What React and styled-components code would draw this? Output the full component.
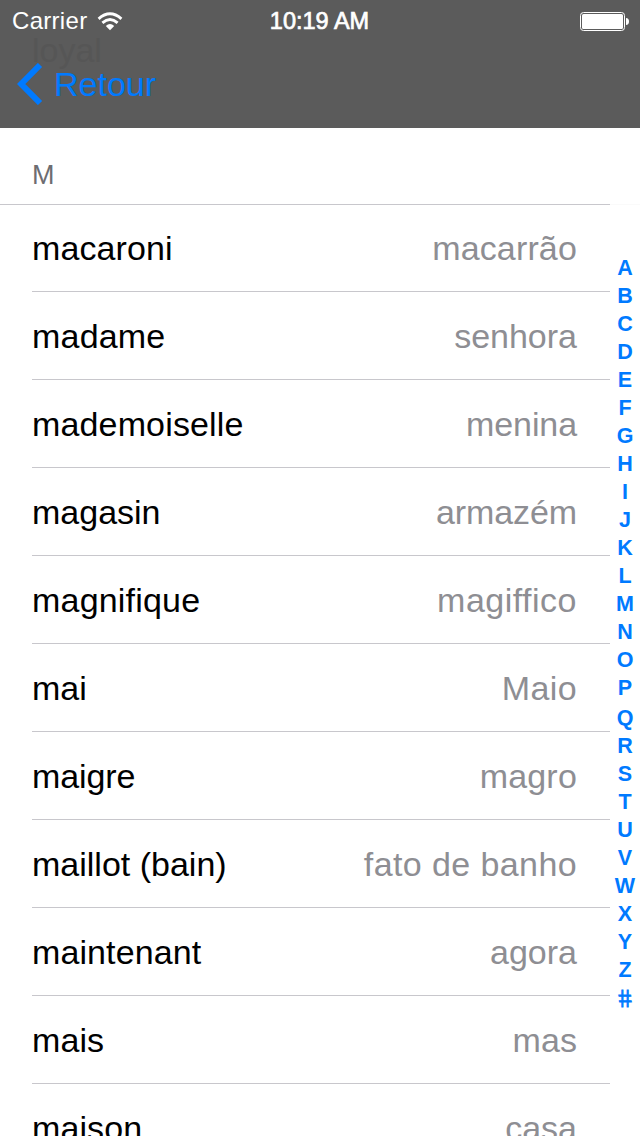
import React from "react";
import styled, { createGlobalStyle, css } from "styled-components";

const GlobalStyle = createGlobalStyle`
  body {
    margin: 0;
    background: #fff;
    overflow: hidden;
    font-family: "Liberation Sans", Arial, sans-serif;
  }
`;

const Screen = styled.div`
  position: relative;
  width: 640px;
  height: 1136px;
  overflow: hidden;
  background: #fff;
`;

const TopBar = styled.header`
  position: relative;
  height: 128px;
  background: #5b5b5b;
`;

const StatusBar = styled.div`
  position: relative;
  display: grid;
  grid-template-columns: 1fr auto 1fr;
  align-items: center;
  height: 40px;
  padding: 0 11px 0 12px;
  color: #fff;
  font-size: 24px;
`;

const Carrier = styled.div`
  display: flex;
  align-items: center;
  gap: 10px;
  letter-spacing: 0.3px;
  line-height: 42px;
`;

const Clock = styled.div`
  padding-right: 2px;
  line-height: 42px;
  font-size: 23.5px;
  -webkit-text-stroke: 0.7px #fff;
`;

const Battery = styled.div`
  display: flex;
  justify-content: flex-end;
`;

const BackButton = styled.button`
  position: relative;
  display: flex;
  align-items: center;
  gap: 11px;
  height: 88px;
  padding: 0 0 0 17px;
  border: 0;
  background: none;
  color: #007aff;
  font: 34px/88px "Liberation Sans", Arial, sans-serif;
  letter-spacing: 0;
`;

const HiddenWord = styled.span`
  position: absolute;
  left: 32px;
  top: 30px;
  color: #565656;
  font-size: 34px;
  line-height: 40px;
`;

const SectionHeader = styled.h2`
  box-sizing: border-box;
  height: 77px;
  margin: 0;
  padding: 32px 0 0 32px;
  border-bottom: 1px solid #c8c7cc;
  color: #6d6d72;
  font-size: 27px;
  font-weight: 400;
  line-height: 30px;
`;

const List = styled.ul`
  margin: 0;
  padding: 0 30px 0 32px;
  list-style: none;
`;

const Row = styled.li`
  display: flex;
  box-sizing: border-box;
  justify-content: space-between;
  height: 88px;
  padding: 24px 33px 0 0;
  border-bottom: 1px solid #c8c7cc;
  font-size: 34px;
  line-height: 40px;

  &:first-child {
    height: 87px;
    padding-top: 23px;
  }
`;

const Word = styled.span`
  color: #000;
  letter-spacing: ${(p) => p.$tracking}px;
`;

const Translation = styled.span`
  color: #8e8e93;
  letter-spacing: ${(p) => p.$tracking}px;
`;

const IndexBar = styled.nav`
  position: absolute;
  top: 128px;
  right: 0;
  bottom: 0;
  display: flex;
  flex-direction: column;
  align-items: center;
  width: 30px;
  padding-top: 126px;
  background: rgba(255, 255, 255, 0.9);
`;

const IndexLetter = styled.span`
  height: 28px;
  margin-top: ${(p) => (p.$shift || 0)}px;
  color: #007aff;
  font-size: 21.5px;
  font-weight: 700;
  line-height: 28px;
  ${(p) =>
    p.$symbol &&
    css`
      font-size: 25px;
      font-weight: 400;
      -webkit-text-stroke: 0.9px #007aff;
      transform: skewX(11deg) scaleX(0.92);
    `}
`;

const words = [
  ["macaroni", "macarrão", 0.1, 0.15],
  ["madame", "senhora", 0.2, 0],
  ["mademoiselle", "menina", 0.15, -0.1],
  ["magasin", "armazém", 0, -0.1],
  ["magnifique", "magiffico", 0.2, 0.5],
  ["mai", "Maio", 0, 0.4],
  ["maigre", "magro", -0.1, 0.2],
  ["maillot (bain)", "fato de banho", 0, 0.4],
  ["maintenant", "agora", 0.1, 0],
  ["mais", "mas", 0.1, 0.1],
  ["maison", "casa", 0.1, 0],
];

const letters = "ABCDEFGHIJKLMNOPQRSTUVWXYZ#".split("");
const shifts = { Q: 2 };

const WifiIcon = () => (
  <svg width="26" height="19" viewBox="0 0 26 19" fill="none" stroke="#fff">
    <path d="M1.6 6.8Q13-3.2 24.4 6.8" strokeWidth="2.9" />
    <path d="M5.4 10.8Q13 4.2 20.6 10.8" strokeWidth="2.9" />
    <path d="M8.8 14Q13 10.2 17.2 14L13 18.2Z" fill="#fff" stroke="none" />
  </svg>
);

const BatteryIcon = () => (
  <svg width="49" height="19" viewBox="0 0 49 19">
    <rect x="0.5" y="0.5" width="44" height="18" rx="3" fill="none" stroke="#fff" />
    <rect x="2" y="2" width="41" height="15" rx="1.5" fill="#fff" />
    <path d="M46 6Q49 6.3 49 9.5Q49 12.7 46 13Z" fill="#fff" />
  </svg>
);

const BackIcon = () => (
  <svg width="26" height="42" viewBox="0 0 26 42" fill="none" stroke="#007aff" strokeWidth="6">
    <path d="M23 2L4.2 21L23 40" />
  </svg>
);

export default function App() {
  return (
    <Screen>
      <GlobalStyle />
      <TopBar>
        <HiddenWord>loyal</HiddenWord>
        <StatusBar>
          <Carrier>
            <span>Carrier</span>
            <WifiIcon />
          </Carrier>
          <Clock>10:19 AM</Clock>
          <Battery>
            <BatteryIcon />
          </Battery>
        </StatusBar>
        <BackButton>
          <BackIcon />
          Retour
        </BackButton>
      </TopBar>
      <SectionHeader>M</SectionHeader>
      <List>
        {words.map(([word, translation, wordTracking, translationTracking]) => (
          <Row key={word}>
            <Word $tracking={wordTracking}>{word}</Word>
            <Translation $tracking={translationTracking}>{translation}</Translation>
          </Row>
        ))}
      </List>
      <IndexBar>
        {letters.map((letter) => (
          <IndexLetter key={letter} $shift={shifts[letter]} $symbol={letter === "#"}>
            {letter}
          </IndexLetter>
        ))}
      </IndexBar>
    </Screen>
  );
}
